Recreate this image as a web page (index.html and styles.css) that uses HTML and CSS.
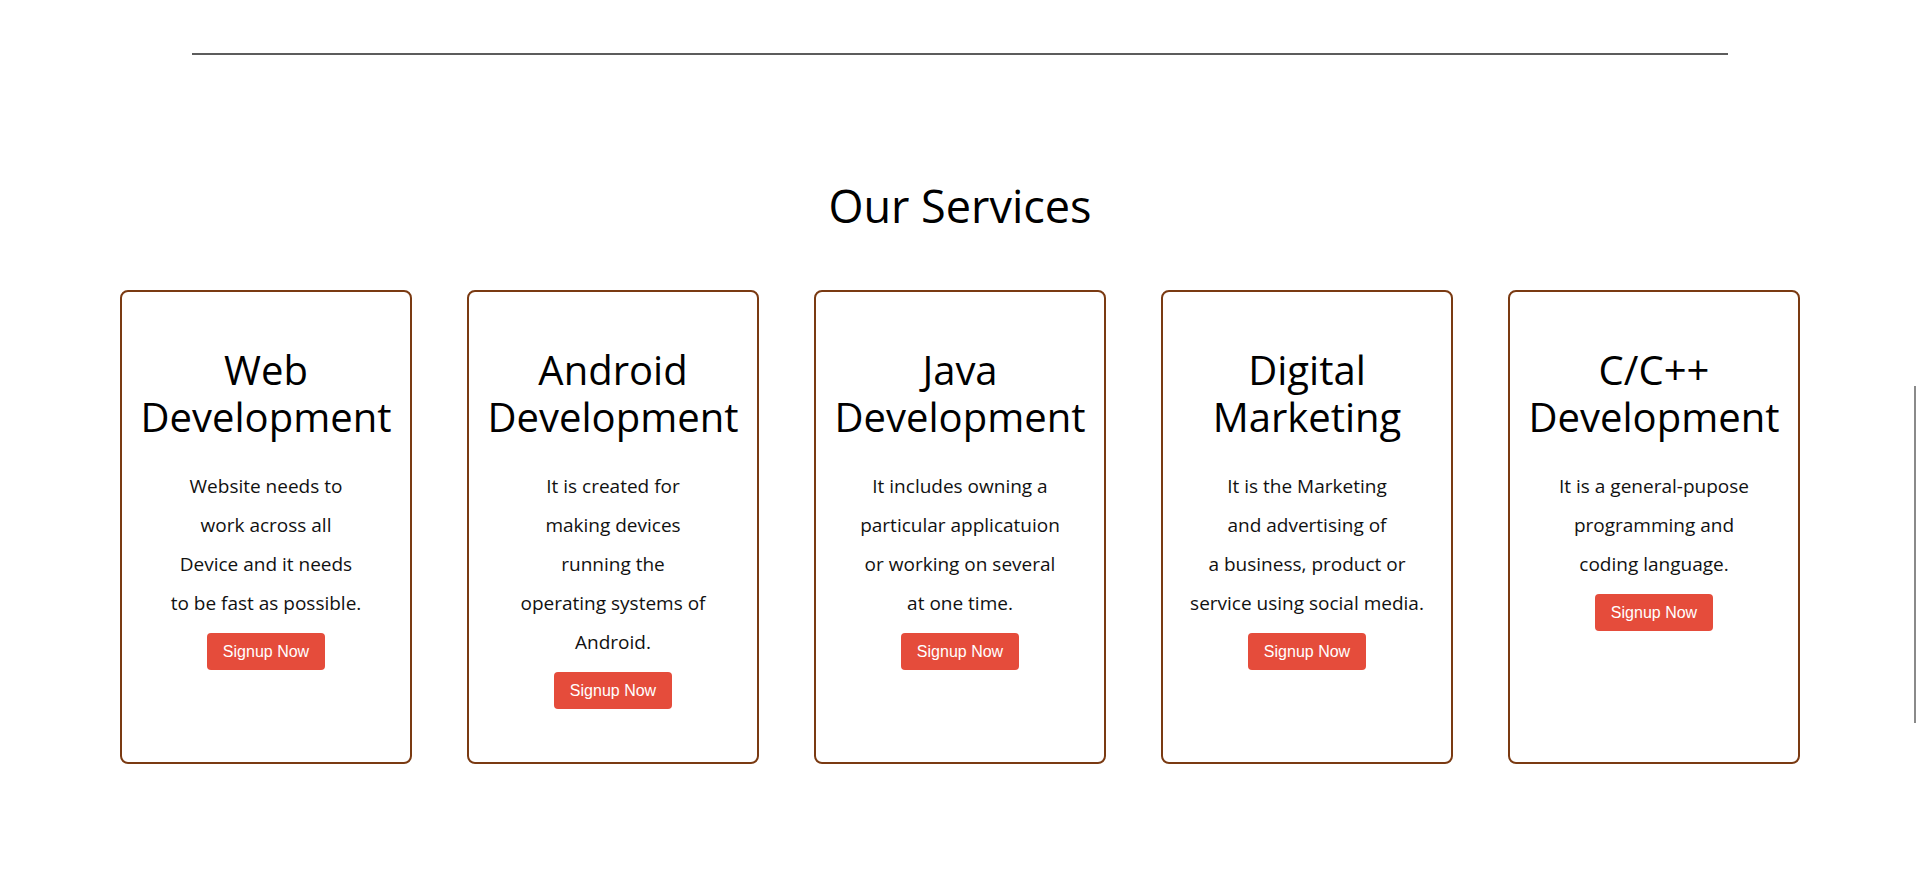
FILE: index.html
```html
<!DOCTYPE html>
<html lang="en">
<head>
<meta charset="utf-8">
<title>Our Services</title>
<link rel="stylesheet" href="styles.css">
</head>
<body>
<hr class="divider">
<section class="services">
  <h1 class="services-title">Our Services</h1>
  <div class="cards">
    <div class="card">
      <h2 class="card-title"><span class="line">Web</span><span class="line">Development</span></h2>
      <p class="card-text">Website needs to<br>work across all<br>Device and it needs<br>to be fast as possible.</p>
      <button class="btn">Signup Now</button>
    </div>
    <div class="card">
      <h2 class="card-title"><span class="line">Android</span><span class="line">Development</span></h2>
      <p class="card-text">It is created for<br>making devices<br>running the<br>operating systems of<br>Android.</p>
      <button class="btn">Signup Now</button>
    </div>
    <div class="card">
      <h2 class="card-title"><span class="line">Java</span><span class="line">Development</span></h2>
      <p class="card-text">It includes owning a<br>particular applicatuion<br>or working on several<br>at one time.</p>
      <button class="btn">Signup Now</button>
    </div>
    <div class="card">
      <h2 class="card-title"><span class="line">Digital</span><span class="line">Marketing</span></h2>
      <p class="card-text">It is the Marketing<br>and advertising of<br>a business, product or<br>service using social media.</p>
      <button class="btn">Signup Now</button>
    </div>
    <div class="card">
      <h2 class="card-title"><span class="line">C/C++</span><span class="line">Development</span></h2>
      <p class="card-text">It is a general-pupose<br>programming and<br>coding language.</p>
      <button class="btn">Signup Now</button>
    </div>
  </div>
</section>
<div class="scroll-thumb"></div>
</body>
</html>
```

FILE: styles.css
```css
html, body {
  margin: 0;
  padding: 0;
  background: #ffffff;
}

body {
  font-family: "Open Sans", "Noto Sans", sans-serif;
  color: #000000;
  height: 874px;
  overflow: hidden;
}

.divider {
  width: 1536px;
  margin: 53px auto 0 auto;
  border: none;
  border-top: 2px solid #5c5c5c;
  height: 0;
}

.services {
  display: flex;
  flex-direction: column;
  align-items: center;
}

.services-title {
  margin: 120px 0 0 0;
  font-size: 45px;
  font-weight: 400;
  line-height: normal;
  text-align: center;
}

.cards {
  display: flex;
  justify-content: center;
  align-items: stretch;
  gap: 55px;
  margin-top: 54px;
}

.card {
  box-sizing: border-box;
  width: 292px;
  border: 2px solid #7a3a12;
  border-radius: 8px;
  padding: 54px 10px 53px 10px;
  display: flex;
  flex-direction: column;
  align-items: center;
  text-align: center;
}

.card-title {
  margin: 0;
  font-size: 40px;
  font-weight: 400;
  line-height: 47px;
  display: flex;
  flex-direction: column;
  align-items: center;
}

.card-title .line {
  display: block;
  height: 47px;
}

.card-text {
  margin: 27px 0 10px 0;
  font-size: 19px;
  font-weight: 400;
  line-height: 39px;
  color: #111111;
}

.btn {
  font-family: "Liberation Sans", Arial, sans-serif;
  font-size: 16px;
  line-height: 19px;
  color: #ffffff;
  background: #e54c3b;
  border: none;
  border-radius: 4px;
  padding: 9px 16px;
  cursor: pointer;
}

.scroll-thumb {
  position: fixed;
  left: 1914px;
  top: 386px;
  width: 2px;
  height: 337px;
  background: #8a8a8a;
}
```
